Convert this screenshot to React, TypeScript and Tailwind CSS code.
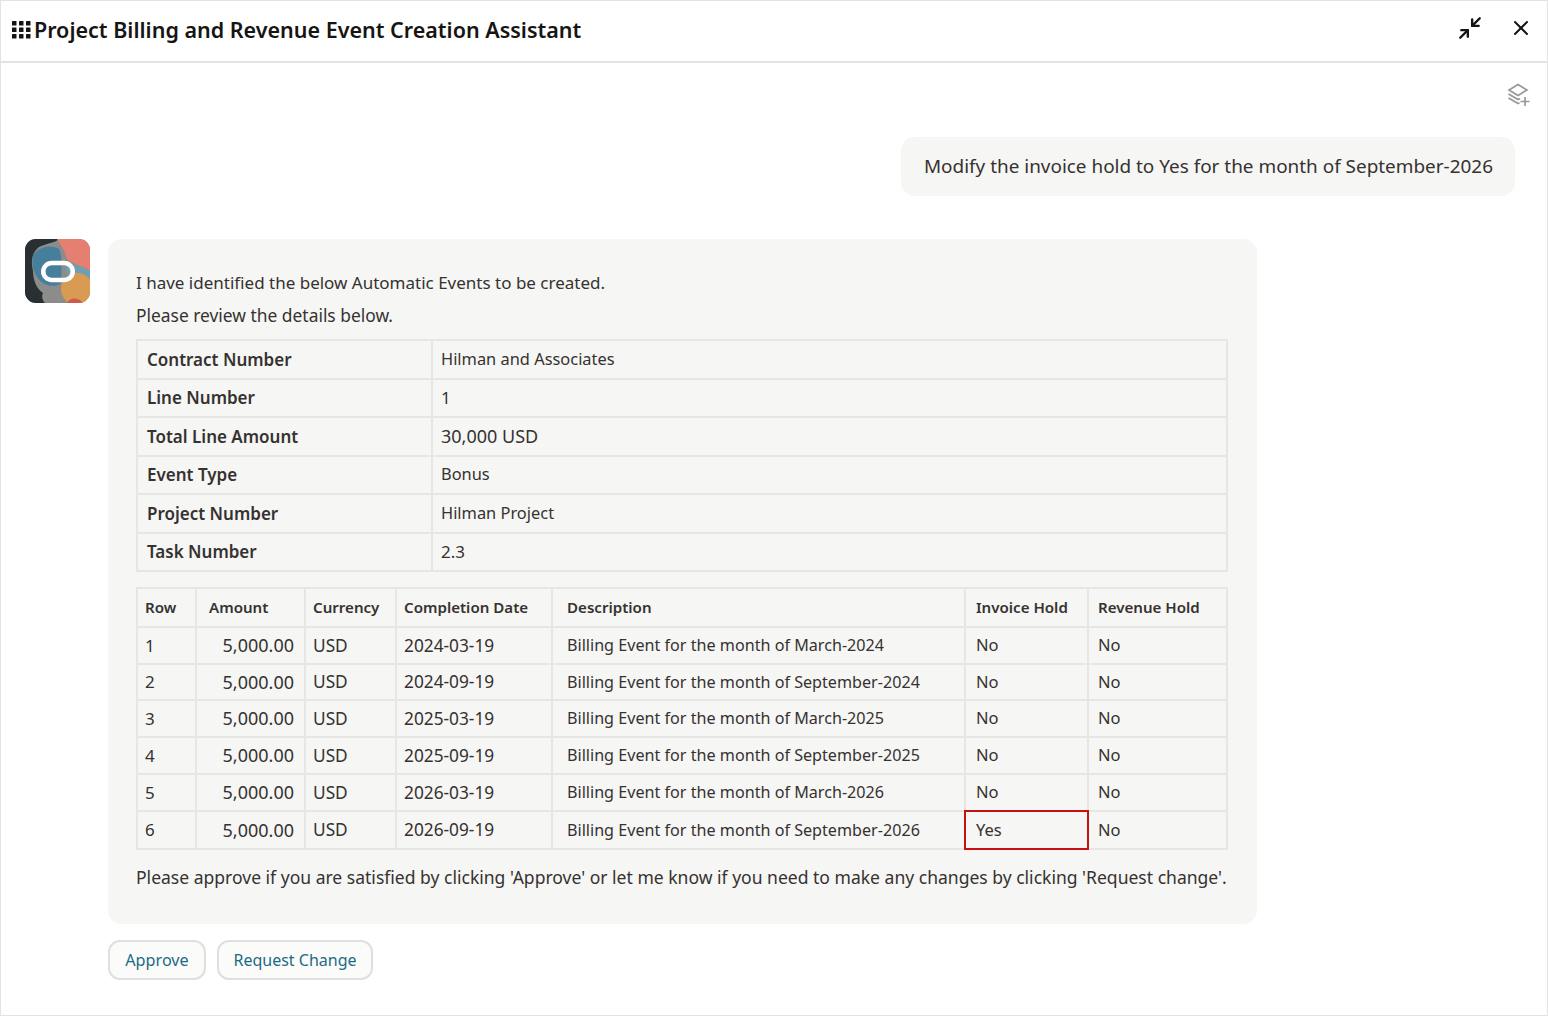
import { Minimize2, X } from "lucide-react";

const details = [
  ["Contract Number", "Hilman and Associates", "text-[16.4px]"],
  ["Line Number", "1", "text-[17px]"],
  ["Total Line Amount", "30,000 USD", "text-[18px]"],
  ["Event Type", "Bonus", "text-[16.4px]"],
  ["Project Number", "Hilman Project", "text-[16.4px]"],
  ["Task Number", "2.3", "text-[17px]"],
];

const events = [
  { row: 1, date: "2024-03-19", desc: "March-2024", hold: "No", h: "h-[37px]" },
  { row: 2, date: "2024-09-19", desc: "September-2024", hold: "No", h: "h-[36px]" },
  { row: 3, date: "2025-03-19", desc: "March-2025", hold: "No", h: "h-[37px]" },
  { row: 4, date: "2025-09-19", desc: "September-2025", hold: "No", h: "h-[37px]" },
  { row: 5, date: "2026-03-19", desc: "March-2026", hold: "No", h: "h-[37px]" },
  { row: 6, date: "2026-09-19", desc: "September-2026", hold: "Yes", h: "h-[38px]" },
];

function Logo() {
  return (
    <svg width="65" height="64" viewBox="0 0 65 64" className="shrink-0 rounded-[11px]">
      <rect width="65" height="64" fill="#8c8c8a" />
      <path d="M0 0H34C30 4 22 4 14 8C6 14 6 24 8 32C8 42 12 50 18 54C16 58 18 62 20 64H0Z" fill="#2a2f33" />
      <path d="M32 0H65V32C56 26 48 26 42 20C40 12 36 6 32 0Z" fill="#e57f72" />
      <path d="M8 16C16 6 28 6 34 10C38 16 36 40 36 44C28 50 16 46 11 36C7 30 7 22 8 16Z" fill="#467f9b" />
      <path d="M40 22C48 26 56 26 65 32V42H48C44 38 40 34 40 22Z" fill="#6f9fb0" />
      <circle cx="52" cy="50" r="16" fill="#d99b51" />
      <path d="M42 64C44 58 54 58 58 64Z" fill="#cf5a4d" />
      <rect x="18.25" y="24" width="29.5" height="17" rx="8.5" fill="none" stroke="#fff" strokeWidth="4.5" />
    </svg>
  );
}

function GridIcon() {
  return (
    <svg width="19" height="18" viewBox="0 0 19 18" fill="#161513" className="shrink-0">
      {[0, 7, 14].map((x) =>
        [0, 6.5, 13].map((y) => <rect key={`${x}-${y}`} x={x} y={y} width="4.5" height="4.5" rx="0.6" />),
      )}
    </svg>
  );
}

function StackPlus() {
  return (
    <svg width="24" height="24" viewBox="0 0 24 24" fill="none" stroke="#9a9896" strokeWidth="1.7">
      <path d="M11 1.5L20 7L11 12.5L2 7Z" />
      <path d="M1.5 11L11 16.5L13 15.4" />
      <path d="M1.5 15L11 20.5L12.5 19.7" />
      <path d="M18 14V23M13.5 18.5H22.5" />
    </svg>
  );
}

export default function App() {
  return (
    <div className="h-[1016px] w-[1548px] overflow-hidden border border-[#e4e3e1] bg-white font-['Noto_Sans',sans-serif] text-[#35322f]">
      <header className="flex h-[62px] items-center justify-between border-b-2 border-[#e4e3e1] pl-[11px] pr-[14px]">
        <div className="mb-[2px] flex items-center gap-[3px]">
          <GridIcon />
          <h1 className="text-[21.5px] font-semibold text-[#161513]">Project Billing and Revenue Event Creation Assistant</h1>
        </div>
        <div className="mb-[6px] flex items-center gap-[26px]">
          <Minimize2 size={26} strokeWidth={2.2} color="#161513" />
          <X size={24} strokeWidth={2} color="#161513" />
        </div>
      </header>

      <div className="flex justify-end pr-[16px] pt-[20px]">
        <StackPlus />
      </div>

      <div className="mr-[32px] mt-[30px] flex justify-end">
        <div className="flex h-[59px] items-center rounded-[14px] bg-[#f6f6f5] pl-[23px] pr-[22px] text-[18.93px]">
          Modify the invoice hold to Yes for the month of September-2026
        </div>
      </div>

      <div className="mt-[43px] flex gap-[18px] pl-[24px]">
        <Logo />
        <div>
          <div className="h-[685px] w-[1149px] rounded-[14px] bg-[#f6f6f5] px-[28px] pt-[28px] text-[16.5px]">
            <p className="text-[17px] leading-[32px]">I have identified the below Automatic Events to be created.</p>
            <p className="text-[17.4px] leading-[32px]">Please review the details below.</p>
            <table className="mt-[8px] w-[1092px] table-fixed border-collapse">
              <colgroup>
                <col className="w-[295px]" />
                <col />
              </colgroup>
              <tbody>
                {details.map(([k, v, size]) => (
                  <tr key={k} className="h-[38.5px]">
                    <td className="whitespace-nowrap border-2 border-[#e6e6e4] pl-[9px] pr-[10px] text-[17px] font-semibold">{k}</td>
                    <td className={`whitespace-nowrap border-2 border-[#e6e6e4] pl-[8px] pr-[10px] ${size}`}>{v}</td>
                  </tr>
                ))}
              </tbody>
            </table>
            <table className="mt-[15px] w-[1092px] table-fixed border-collapse">
              <colgroup>
                <col className="w-[59px]" />
                <col className="w-[109px]" />
                <col className="w-[91px]" />
                <col className="w-[156px]" />
                <col className="w-[413px]" />
                <col className="w-[123px]" />
                <col />
              </colgroup>
              <thead>
                <tr className="h-[39px] text-[15.1px]">
                  <th className="whitespace-nowrap border-2 border-[#e6e6e4] pl-[7px] text-left font-semibold">Row</th>
                  <th className="whitespace-nowrap border-2 border-[#e6e6e4] pl-[12px] text-left font-semibold">Amount</th>
                  <th className="whitespace-nowrap border-2 border-[#e6e6e4] pl-[7px] text-left font-semibold">Currency</th>
                  <th className="whitespace-nowrap border-2 border-[#e6e6e4] pl-[7px] text-left font-semibold">Completion Date</th>
                  <th className="whitespace-nowrap border-2 border-[#e6e6e4] pl-[14px] text-left font-semibold">Description</th>
                  <th className="whitespace-nowrap border-2 border-[#e6e6e4] pl-[10px] text-left font-semibold">Invoice Hold</th>
                  <th className="whitespace-nowrap border-2 border-[#e6e6e4] pl-[9px] text-left font-semibold">Revenue Hold</th>
                </tr>
              </thead>
              <tbody>
                {events.map((e) => (
                  <tr key={e.row} className={e.h}>
                    <td className="border-2 border-[#e6e6e4] pl-[7px] text-[17px]">{e.row}</td>
                    <td className="border-2 border-[#e6e6e4] pr-[10px] text-right text-[18px]">5,000.00</td>
                    <td className="border-2 border-[#e6e6e4] pl-[7px] text-[17.3px]">USD</td>
                    <td className="border-2 border-[#e6e6e4] pl-[7px] text-[17.3px]">{e.date}</td>
                    <td className="whitespace-nowrap border-2 border-[#e6e6e4] pl-[14px] text-[16.15px]">Billing Event for the month of {e.desc}</td>
                    <td className={e.hold === "Yes" ? "border-2 border-[#e6e6e4] pl-[10px] outline-2 -outline-offset-1 outline-[#c81010]" : "border-2 border-[#e6e6e4] pl-[10px]"}>{e.hold}</td>
                    <td className="border-2 border-[#e6e6e4] pl-[9px]">No</td>
                  </tr>
                ))}
              </tbody>
            </table>
            <p className="mt-[13px] whitespace-nowrap text-[17.55px] leading-[28px]">
              Please approve if you are satisfied by clicking 'Approve' or let me know if you need to make any changes by clicking 'Request change'.
            </p>
          </div>
          <div className="mt-[16px] flex gap-[11px]">
            <button className="h-[40px] w-[98px] rounded-[12px] border-2 border-[#e0dfdd] bg-[#fbfbfa] text-[16.2px] text-[#1d6a86]">Approve</button>
            <button className="h-[40px] w-[156px] rounded-[12px] border-2 border-[#e0dfdd] bg-[#fbfbfa] text-[16px] text-[#1d6a86]">Request Change</button>
          </div>
        </div>
      </div>
    </div>
  );
}
